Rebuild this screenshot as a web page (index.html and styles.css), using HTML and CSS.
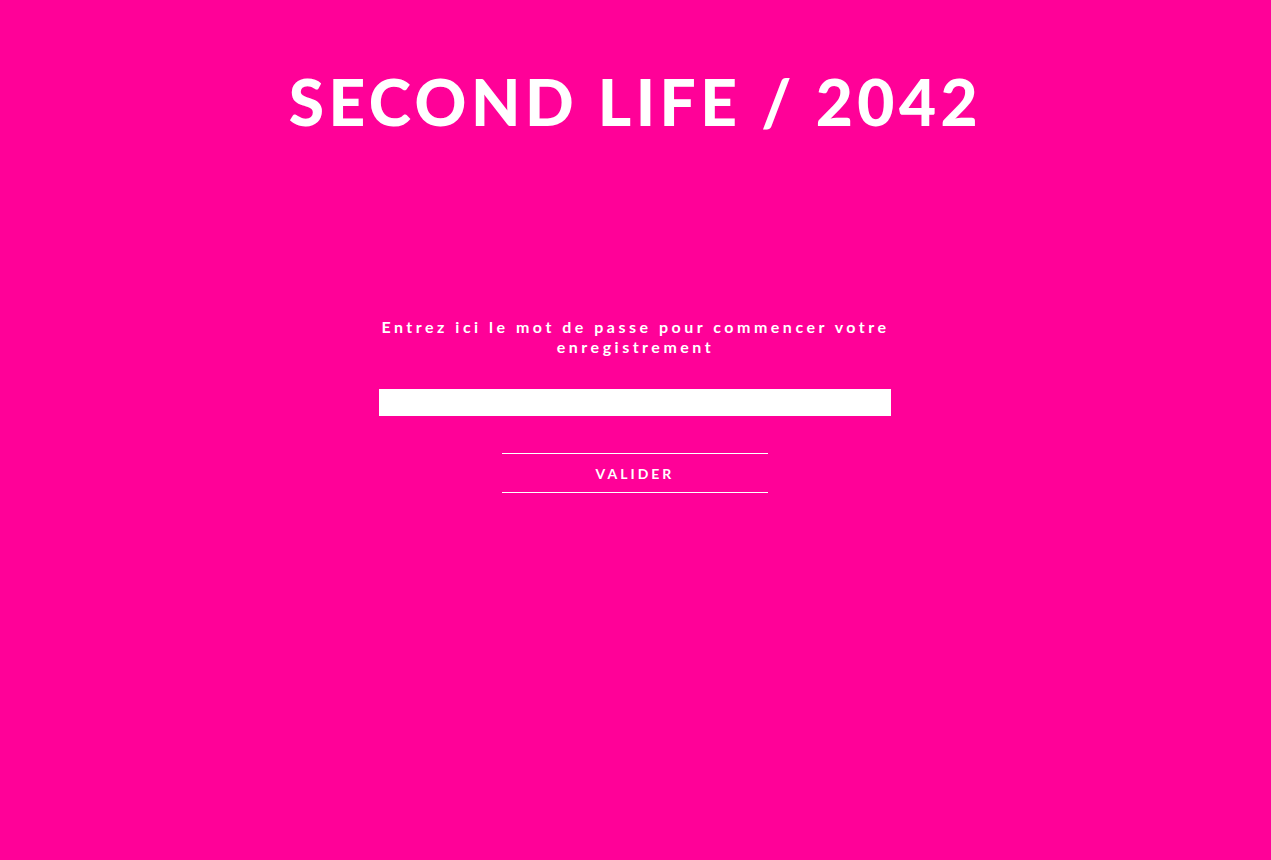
FILE: index.html
```html
<!DOCTYPE html>
<html lang="fr">
<head>
<meta charset="utf-8">
<title>Second Life / 2042</title>
<link rel="stylesheet" href="styles.css">
</head>
<body>
<main class="page">
  <h1 class="title">SECOND LIFE / 2042</h1>
  <form class="login">
    <p class="prompt">Entrez ici le mot de passe pour commencer votre enregistrement</p>
    <input class="password" type="password" aria-label="Mot de passe">
    <button class="submit" type="button">VALIDER</button>
  </form>
</main>
</body>
</html>
```
FILE: styles.css
```css
html, body {
  margin: 0;
  padding: 0;
  background: #ff0198;
  height: 100%;
}
body {
  font-family: Lato, "Open Sans", "Liberation Sans", sans-serif;
  color: #ffffff;
}
.page {
  display: flex;
  flex-direction: column;
  align-items: center;
  padding-top: 62px;
  padding-right: 1px;
}
.title {
  margin: 0;
  font-size: 64px;
  font-weight: 900;
  letter-spacing: 4.5px;
  line-height: 80px;
  padding-left: 1px;
}
.login {
  width: 512px;
  display: flex;
  flex-direction: column;
  align-items: center;
  margin-top: 175px;
}
.prompt {
  margin: 0;
  text-align: center;
  font-size: 16px;
  font-weight: 700;
  letter-spacing: 3.5px;
  line-height: 20px;
  padding-left: 1px;
}
.password {
  margin-top: 32px;
  width: 512px;
  height: 27px;
  box-sizing: border-box;
  border: none;
  background: #ffffff;
  padding: 0 8px;
}
.submit {
  margin-top: 37px;
  width: 266px;
  height: 40px;
  background: transparent;
  border: none;
  border-top: 1px solid #ffffff;
  border-bottom: 1px solid #ffffff;
  color: #ffffff;
  font-family: inherit;
  font-size: 14px;
  font-weight: 700;
  letter-spacing: 3px;
  padding: 0;
}
```
